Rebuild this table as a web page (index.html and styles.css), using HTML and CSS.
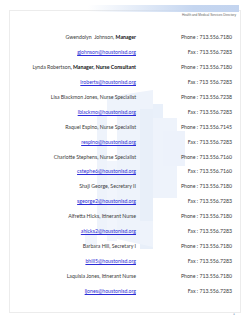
FILE: index.html
```html
<!DOCTYPE html>
<html lang="en">

<head>
  <meta charset="UTF-8">
  <meta name="viewport" content="width=device-width, initial-scale=1.0">
  <title>Health and Medical Services Directory</title>
  <link rel="stylesheet" href="styles.css">
</head>

<body>
  <div class="band"></div>
  <main class="page">
    <svg class="watermark" viewBox="0 0 231 302" aria-hidden="true">
      <polygon points="97,86 143,79 143,98 97,104" fill="#eef3fb" />
      <rect x="143" y="93" width="10" height="14" fill="#e9f0fa" />
      <rect x="87" y="104" width="10" height="120" fill="#eef3fb" />
      <rect x="107" y="100" width="23" height="110" fill="#eef3fb" />
      <rect x="130" y="98" width="13" height="140" fill="#e8eff9" />
      <rect x="143" y="107" width="24" height="80" fill="#eef3fb" />
      <rect x="153" y="120" width="22" height="35" fill="#edf2fb" />
      <rect x="97" y="150" width="10" height="80" fill="#f1f5fc" />
      <polygon points="107,210 143,210 143,236 107,228" fill="#eef3fb" />
      <rect x="75" y="220" width="12" height="14" fill="#f1f5fc" />
    </svg>
    <p class="title">Health and Medical Services Directory</p>
    <div class="directory">
      <span>Gwendolyn&nbsp; Johnson, <b>Manager</b></span>
      <span>Phone : 713.556.7180</span>
      <a href="#">gjohnson@houstonisd.org</a>
      <span>Fax : 713.556.7283</span>

      <span>Lynda Robertson<b>, Manager, Nurse Consultant</b></span>
      <span>Phone : 713.556.7180</span>
      <a href="#">lroberts@houstonisd.org</a>
      <span>Fax : 713 556.7283</span>

      <span>Lisa Blackmon Jones, Nurse Specialist</span>
      <span>Phone : 713.556.7238</span>
      <a href="#">lblackmo@houstonisd.org</a>
      <span>Fax : 713.556.7283</span>

      <span>Raquel Espino, Nurse Specialist</span>
      <span>Phone : 713.556.7145</span>
      <a href="#">respino@houstonisd.org</a>
      <span>Fax : 713.556.7283</span>

      <span>Charlotte Stephens, Nurse Specialist</span>
      <span>Phone : 713.556.7160</span>
      <a href="#">cstephe6@houstonisd.org</a>
      <span>Fax : 713.556.7160</span>

      <span>Shaji George, Secretary II</span>
      <span>Phone : 713.556.7180</span>
      <a href="#">sgeorge2@houstonisd.org</a>
      <span>Fax : 713.556.7283</span>

      <span>Alfretta Hicks, Itinerant Nurse</span>
      <span>Phone : 713.556.7180</span>
      <a href="#">ahicks2@houstonisd.org</a>
      <span>Fax : 713.556.7283</span>

      <span>Barbara Hill, Secretary I</span>
      <span>Phone : 713.556.7180</span>
      <a href="#">bhill5@houstonisd.org</a>
      <span>Fax : 713.556.7283</span>

      <span>Laquisia Jones, Itinerant Nurse</span>
      <span>Phone : 713.556.7180</span>
      <a href="#">ljones@houstonisd.org</a>
      <span>Fax : 713.556.7283</span>
    </div>
  </main>
  <p class="page-num">1</p>
</body>

</html>
```

FILE: styles.css
```css
* {
  padding: 0;
  margin: 0;
  box-sizing: border-box;
}

body {
  font-family: Lato, "Open Sans", Arial, sans-serif;
  width: 250px;
  height: 323px;
  overflow: hidden;
  background-color: white;
  color: #3a3a3a;
  padding-top: 5px;
}

.band {
  position: relative;
  z-index: 1;
  margin-left: 88px;
  width: 151px;
  height: 7px;
  background: linear-gradient(to right, rgba(200, 216, 240, 0), #c5d6f0 70%, #c3d4ef);
}

.page {
  position: relative;
  margin: -2px 0 0 9px;
  width: 232px;
  height: 303px;
  border: 1px solid #ececec;
}

.watermark {
  position: absolute;
  left: 0;
  top: 0;
  width: 231px;
  height: 302px;
}

.title {
  position: relative;
  text-align: right;
  font-family: "Liberation Sans", Arial, sans-serif;
  font-size: 3.2px;
  color: #666;
  padding: 2px 4px 0 0;
  line-height: 4px;
}

.directory {
  position: relative;
  display: grid;
  grid-template-columns: 126px 96px;
  grid-auto-rows: 14.9px;
  align-items: center;
  justify-items: end;
  padding-top: 13px;
  font-size: 5.2px;
}

.directory b {
  font-weight: bold;
  color: #111;
}

.directory a {
  color: #2b2bd6;
  text-decoration: underline;
}

.page-num {
  text-align: right;
  padding-right: 15px;
  font-family: "Liberation Sans", Arial, sans-serif;
  font-size: 3.5px;
  color: #5577aa;
  line-height: 3px;
}
```
